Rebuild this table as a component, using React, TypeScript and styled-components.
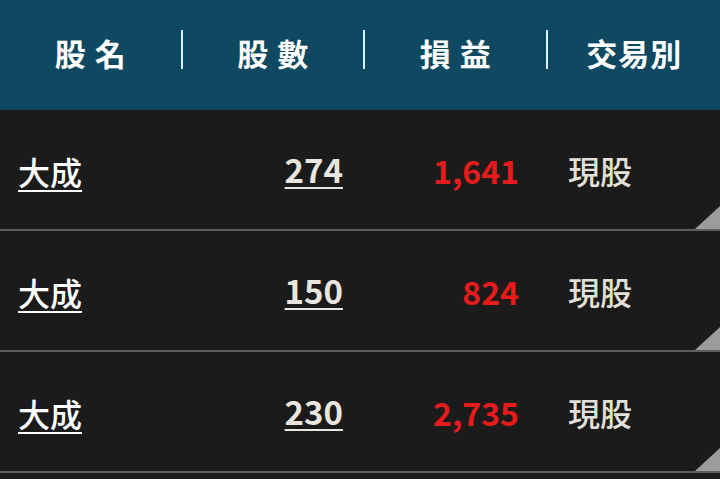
import React from "react";
import styled, { createGlobalStyle } from "styled-components";

const Global = createGlobalStyle`
  html, body { margin: 0; padding: 0; background: #1b1b1b; }
  body { font-family: "Noto Sans CJK TC", "Noto Sans", sans-serif; overflow: hidden; }
`;

const Page = styled.div`
  width: 720px;
  height: 479px;
  overflow: hidden;
  background: #1b1b1b;
`;

const Header = styled.div`
  height: 110px;
  box-sizing: border-box;
  padding-bottom: 5px;
  background: #0f4961;
  display: flex;
  align-items: center;
`;

const HeaderCell = styled.div<{ $spaced?: boolean }>`
  flex: 1;
  text-align: center;
  color: #ffffff;
  font-size: 31px;
  font-weight: 700;
  line-height: 1;
  letter-spacing: ${(p) => (p.$spaced ? "9px" : "1px")};
  padding-left: ${(p) => (p.$spaced ? "9px" : "1px")};
`;

const Divider = styled.div`
  width: 2px;
  height: 39px;
  margin-bottom: 6px;
  background: #dcf2ff;
  flex: none;
`;

const Row = styled.div`
  position: relative;
  height: 119px;
  border-bottom: 2px solid #5e5e5e;
  display: grid;
  grid-template-columns: 180px 181px 181px 178px;
  align-items: center;
`;

const Corner = styled.div`
  position: absolute;
  right: 0;
  bottom: 0;
  width: 25px;
  height: 23px;
  background: #9c9c9c;
  clip-path: polygon(100% 0, 100% 100%, 0 100%);
`;

const Name = styled.div`
  padding-left: 18px;
  font-size: 32px;
  font-weight: 500;
  color: #ffffff;
  text-decoration: underline;
  text-decoration-thickness: 2px;
  text-underline-offset: 5px;
  line-height: 1;
  padding-top: 2px;
`;

const Qty = styled.div`
  text-align: right;
  padding-right: 18px;
  font-size: 33px;
  font-weight: 700;
  color: #e9e6df;
  text-decoration: underline;
  text-decoration-thickness: 2px;
  text-underline-offset: 4px;
  line-height: 1;
`;

const Profit = styled.div`
  text-align: right;
  padding-right: 23px;
  font-size: 32px;
  font-weight: 700;
  color: #e81b1b;
  line-height: 1;
  padding-top: 1px;
`;

const Kind = styled.div`
  padding-left: 26px;
  font-size: 32px;
  font-weight: 500;
  color: #e3e0d9;
  line-height: 1;
`;

const rows = [
  { name: "大成", qty: "274", profit: "1,641", kind: "現股" },
  { name: "大成", qty: "150", profit: "824", kind: "現股" },
  { name: "大成", qty: "230", profit: "2,735", kind: "現股" },
];

export default function App() {
  return (
    <Page>
      <Global />
      <Header>
        <HeaderCell $spaced>股名</HeaderCell>
        <Divider />
        <HeaderCell $spaced>股數</HeaderCell>
        <Divider />
        <HeaderCell $spaced>損益</HeaderCell>
        <Divider />
        <HeaderCell>交易別</HeaderCell>
      </Header>
      {rows.map((r, i) => (
        <Row key={i}>
          <Name>{r.name}</Name>
          <Qty>{r.qty}</Qty>
          <Profit>{r.profit}</Profit>
          <Kind>{r.kind}</Kind>
          <Corner />
        </Row>
      ))}
      <Row />
    </Page>
  );
}
